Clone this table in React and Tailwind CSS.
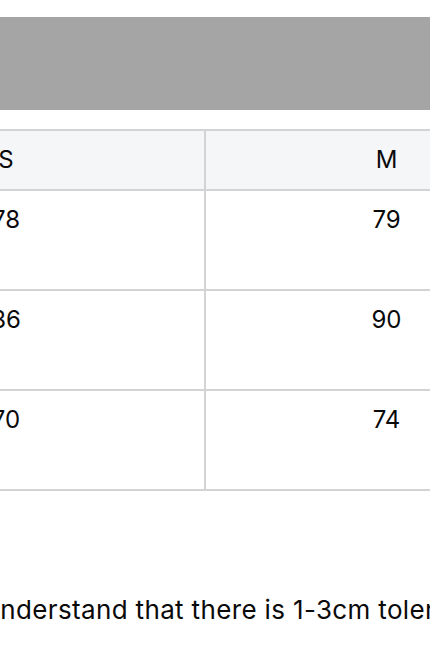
import React from "react";

// size chart, page scrolled sideways so only part of it shows
const rows = [
    { label: "Length", s: "78", m: "79", l: "80" },
    { label: "Chest", s: "86", m: "90", l: "94" },
    { label: "Waist", s: "70", m: "74", l: "78" },
];

export default function App() {
    return (
        <div
            className="w-[430px] h-[645px] overflow-hidden bg-white text-[#0a0a0a]"
            style={{ fontFamily: "Inter, 'Liberation Sans', sans-serif" }}
        >
            {/* banner placeholder */}
            <div className="pt-[17px]">
                <div className="h-[93px] bg-[#a5a5a5]" />
            </div>

            <div className="mt-[19px] overflow-hidden">
                <div className="-ml-[394px] w-[1400px] border-t-2 border-[#d3d3d3] text-[24px] leading-[36px]">
                    <div className="flex h-[60px] bg-[#f5f6f8] border-b-2 border-[#d3d3d3]">
                        <div className="w-[202px] shrink-0 border-r-2 border-[#d3d3d3] flex items-center justify-center">Size</div>
                        <div className="w-[398px] shrink-0 border-r-2 border-[#d3d3d3] flex items-center justify-center">S</div>
                        <div className="w-[363px] shrink-0 border-r-2 border-[#d3d3d3] flex items-center justify-center">M</div>
                        <div className="w-[363px] shrink-0 flex items-center justify-center">L</div>
                    </div>
                    {rows.map((r) => (
                        <div key={r.label} className="flex h-[100px] border-b-2 border-[#d3d3d3]">
                            <div className="w-[202px] shrink-0 border-r-2 border-[#d3d3d3] pt-[11px] text-center">{r.label}</div>
                            <div className="w-[398px] shrink-0 border-r-2 border-[#d3d3d3] pt-[11px] text-center">{r.s}</div>
                            <div className="w-[363px] shrink-0 border-r-2 border-[#d3d3d3] pt-[11px] text-center">{r.m}</div>
                            <div className="w-[363px] shrink-0 pt-[11px] text-center">{r.l}</div>
                        </div>
                    ))}
                </div>
            </div>

            <p className="mt-[103px] -ml-[107px] whitespace-nowrap text-[26px] leading-[32px] tracking-[0.35px]">
                Please understand that there is 1-3cm tolerance due to manual measurement.
            </p>
        </div>
    );
}
